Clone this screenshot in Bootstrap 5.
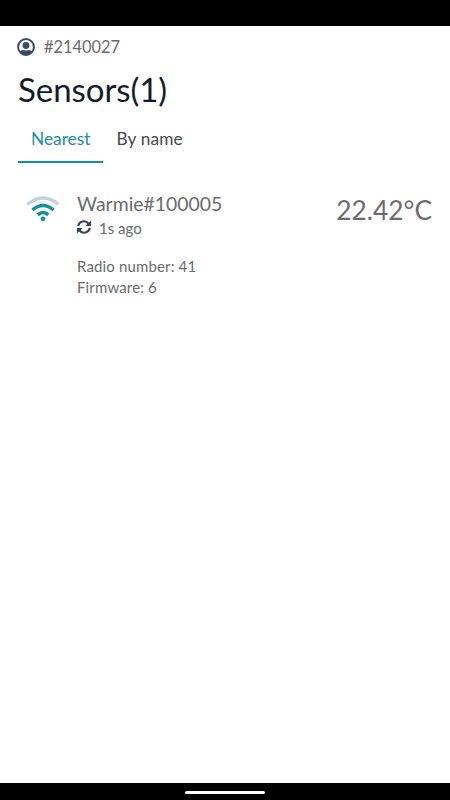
<!DOCTYPE html>
<html lang="en">
<head>
<meta charset="utf-8">
<meta name="viewport" content="width=device-width, initial-scale=1">
<title>Sensors</title>
<link href="https://cdn.jsdelivr.net/npm/bootstrap@5.3.0/dist/css/bootstrap.min.css" rel="stylesheet">
<style>
body{font-family:Lato,"Open Sans",sans-serif;color:#6c6c6c;background:#fff;overflow:hidden}
.status-bar{height:26px;background:#000}
.home-bar{height:17px;background:#000}
.home-pill{width:80px;height:3px;background:#fff;margin-top:2px}
.screen{padding:0 18px}
.account{height:20px;margin-top:11px;font-size:16.4px;line-height:20px}
.account svg{width:18px;height:18px;margin:-1px 9px 0 -1px}
.page-title{font-size:33px;line-height:40px;font-weight:400;letter-spacing:-.05px;color:#141c2b;margin-top:12px}
.tabs .nav-link{height:46px;padding:9px 13px 0;font-size:17.3px;line-height:26px;color:#484848;border-bottom:2px solid transparent}
.tabs{margin-top:8px}
.tabs .nav-link:last-child{letter-spacing:.15px}
.tabs .nav-link.active{color:#198fa0;border-color:#148fa0}
.sensor{margin-top:28px}
.signal{width:34px;height:28px;margin:4px 0 0 8px}
.details{margin-left:17px}
.sensor-name{font-size:19.4px;line-height:26px}
.updated{font-size:15px;line-height:20px;margin-top:1px}
.updated svg{width:14px;height:14px;margin:-2px 8px 0 0}
.specs{font-size:15px;line-height:21px;letter-spacing:.15px;margin-top:18px}
.reading{font-size:26.300px;line-height:38px}
</style>
<script src="https://cdn.jsdelivr.net/npm/bootstrap@5.3.0/dist/js/bootstrap.bundle.min.js"></script>
</head>
<body class="d-flex flex-column vh-100">
<div class="status-bar flex-shrink-0"></div>
<main class="screen flex-grow-1">
  <div class="account d-flex align-items-center">
    <svg viewBox="0 0 18 18"><defs><clipPath id="face"><circle cx="9" cy="9" r="8"/></clipPath></defs><circle cx="9" cy="9" r="7.9" fill="none" stroke="#3d4a63" stroke-width="2"/><circle cx="9" cy="7.500" r="3.400" fill="#3d4a63"/><path clip-path="url(#face)" d="M2 18v-4.500Q4.500 12 6.500 12Q9 12.800 11.500 12Q13.500 12 16 13.500V18Z" fill="#3d4a63"/></svg>
    <span>#2140027</span>
  </div>
  <h1 class="page-title mb-0">Sensors(1)</h1>
  <nav class="tabs nav">
    <a class="nav-link active" href="#">Nearest</a>
    <a class="nav-link" href="#">By name</a>
  </nav>
  <section class="sensor d-flex align-items-start">
    <svg class="signal flex-shrink-0" viewBox="0 0 34 28" fill="none" stroke="#148fa0" stroke-width="3.400"><path stroke="#c5cede" d="M1.500 9.300Q17 -3.300 32.500 9.300"/><path d="M6.500 14.900Q17 6.300 27.500 14.900"/><path d="M11.700 19.900Q17 15.300 22.300 19.900"/><circle cx="17" cy="23.800" r="2.400" fill="#148fa0" stroke="none"/></svg>
    <div class="details flex-grow-1">
      <div class="sensor-name">Warmie#100005</div>
      <div class="updated d-flex align-items-center">
        <svg viewBox="0 0 14 14" fill="none" stroke="#334260" stroke-width="2"><path d="M1.200 6A5.800 5.800 0 0 1 11.400 3.500M12.800 8A5.800 5.800 0 0 1 2.600 10.500"/><path fill="#334260" stroke="none" d="M14 .5V6H8.500zM0 13.500V8h5.500z"/></svg>
        <span>1s ago</span>
      </div>
      <div class="specs"><div>Radio number: 41</div><div>Firmware: 6</div></div>
    </div>
    <div class="reading">22.42°C</div>
  </section>
</main>
<footer class="home-bar flex-shrink-0 d-flex justify-content-center align-items-center"><div class="home-pill rounded-pill"></div></footer>
</body>
</html>
